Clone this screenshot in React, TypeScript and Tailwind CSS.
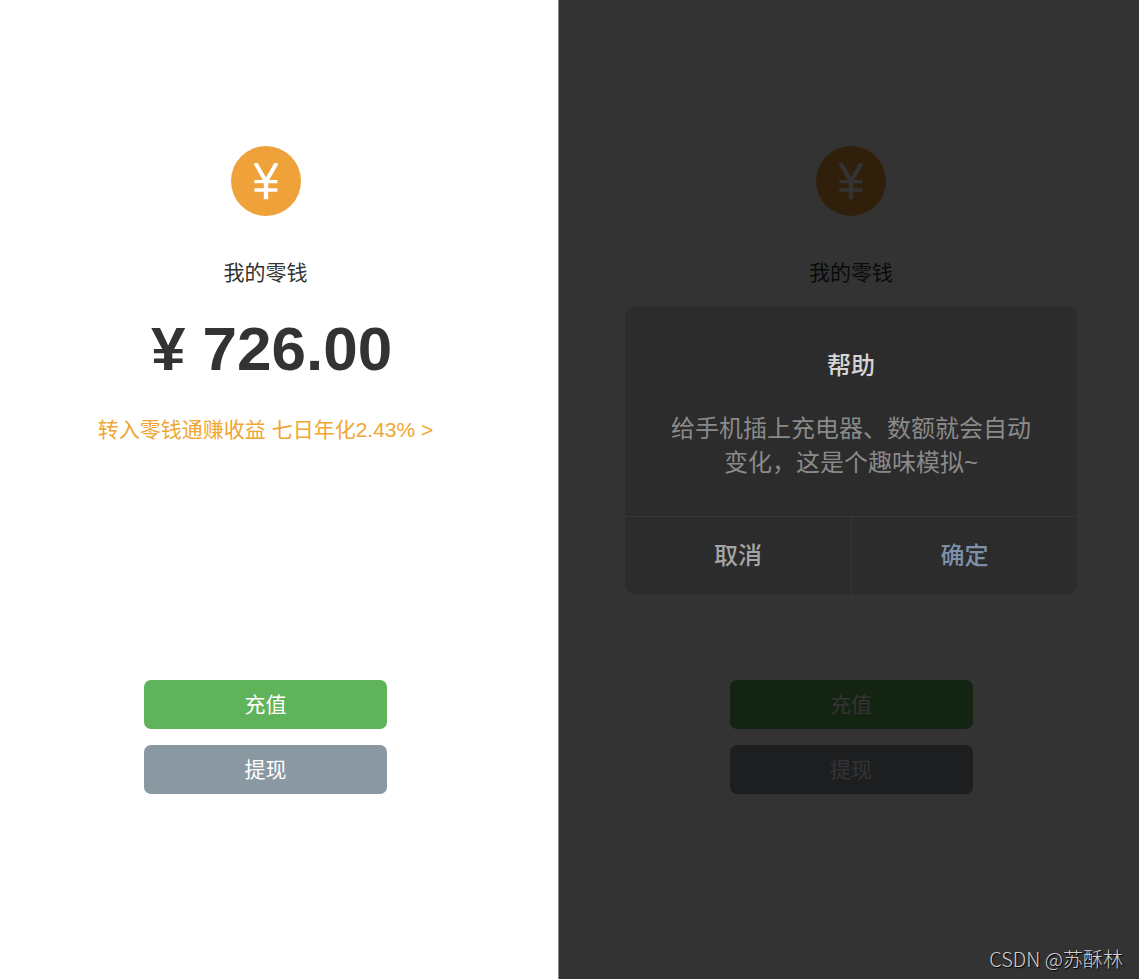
function YuanIcon() {
  return (
    <svg viewBox="0 0 70 70" className="size-[70px]" aria-hidden="true">
      <circle cx="35" cy="35" r="35" fill="#efa13a" />
      <g fill="none" stroke="#fff">
        <path d="M24.4 17 L35 35.6 L45.6 17" strokeWidth="4" />
        <path d="M35 33 V53.2" strokeWidth="4.4" />
        <path d="M23.4 35.6 H46.4 M23.4 44 H46.4" strokeWidth="3.4" />
      </g>
      <path d="M20 13 H50 V17 H20 Z" fill="#efa13a" />
    </svg>
  );
}

function Wallet({ covered = false }: { covered?: boolean }) {
  return (
    <div className="flex flex-col items-center pt-[146px] text-[21px] leading-8">
      <YuanIcon />
      <p className="mt-[41px] text-[#333]">我的零钱</p>
      <div className={covered ? "invisible flex flex-col items-center" : "flex flex-col items-center"}>
        <p className="mt-6 pl-3 text-[62px] leading-[72px] font-bold whitespace-nowrap text-[#333]">¥ 726.00</p>
        <a href="#invest" className="mt-[29px] whitespace-nowrap text-[#f0a632]">
          转入零钱通赚收益 七日年化2.43% &gt;
        </a>
      </div>
      <div className="mt-[234px] flex w-[243px] flex-col gap-4 text-white">
        <button type="button" className="h-[49px] rounded-[7px] bg-[#5fb35a]">充值</button>
        <button type="button" className="h-[49px] rounded-[7px] bg-[#8a98a1]">提现</button>
      </div>
    </div>
  );
}

function HelpDialog() {
  return (
    <div
      role="dialog"
      aria-labelledby="help-title"
      className="w-[452px] overflow-hidden rounded-xl bg-[#2c2c2c] text-center text-2xl"
    >
      <div className="px-8 pt-[42px] pb-9">
        <h2 id="help-title" className="leading-9 font-medium text-[#d5d5d5]">帮助</h2>
        <p className="mt-7 leading-[34px] text-[#8a8a8a]">
          给手机插上充电器、数额就会自动
          <br />
          变化，这是个趣味模拟~
        </p>
      </div>
      <div className="grid h-[79px] grid-cols-2 border-t border-[#363636] font-medium">
        <button type="button" className="text-[#a5a5a5]">取消</button>
        <button type="button" className="border-l border-[#363636] text-[#7d90a9]">确定</button>
      </div>
    </div>
  );
}

export default function App() {
  return (
    <main className="relative grid min-h-screen grid-cols-[49fr_51fr] bg-white font-['Liberation_Sans','Noto_Sans_CJK_SC',sans-serif]">
      <section className="pr-[27px]">
        <Wallet />
      </section>
      <section className="relative border-l border-[#8a8a8a] pl-1">
        <div inert>
          <Wallet covered />
        </div>
        <div className="absolute inset-0 flex items-start justify-center bg-black/80 pt-[306px] pl-1">
          <HelpDialog />
        </div>
      </section>
      <p className="absolute right-4 bottom-1 font-['Noto_Sans_CJK_SC',sans-serif] text-xl leading-8 font-light text-[#d0d0d0] [text-shadow:1px_1px_1px_#000]">
        CSDN @苏酥林
      </p>
    </main>
  );
}
